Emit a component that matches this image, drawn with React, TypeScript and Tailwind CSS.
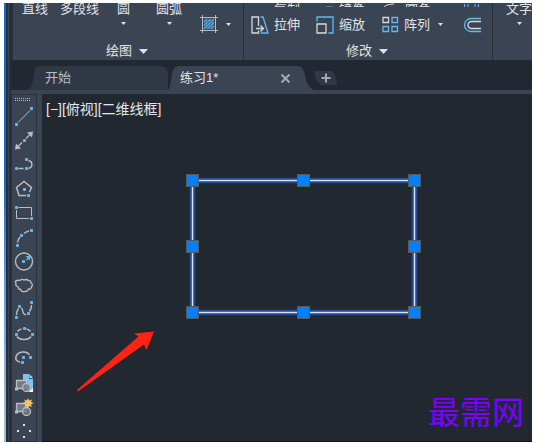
import { ReactNode } from "react";

const GREY = "#b9bdc3";
const BLUE = "#63b8f0";

function Dot({ x, y }: { x: number; y: number }) {
  return <rect x={Math.floor(x) - 1} y={Math.floor(y) - 1} width="3" height="3" rx="0.7" fill={BLUE} stroke="none" />;
}

function Caret({ big = false }: { big?: boolean }) {
  return (
    <svg width={big ? 9 : 5} height={big ? 5 : 3} viewBox="0 0 8 4" preserveAspectRatio="none" aria-hidden="true">
      <path d="M0 0h8L4 4z" fill="#dde0e4" />
    </svg>
  );
}

const drawTools: { name: string; icon: ReactNode }[] = [
  {
    name: "直线",
    icon: (
      <>
        <path d="M6 17.500L18 5.500" />
        <Dot x={4} y={19} />
        <Dot x={19.5} y={3.5} />
      </>
    ),
  },
  {
    name: "构造线",
    icon: (
      <>
        <path d="M6.500 17L10 13.500M14 9.500l3.500-3.500" strokeWidth="1.3" />
        <path d="M3 20.500l1-6 5 5zM21 2.500l-6 1 5 5z" fill={GREY} stroke="none" />
        <Dot x={12} y={11.5} />
      </>
    ),
  },
  {
    name: "多段线",
    icon: (
      <>
        <path d="M6.500 15.500h5M16.500 7.500c4.500 1 4.500 7 0 8" strokeWidth="1.5" />
        <Dot x={4} y={15.5} />
        <Dot x={14} y={15.5} />
        <Dot x={14} y={6.5} />
      </>
    ),
  },
  {
    name: "多边形",
    icon: (
      <>
        <path d="M17.500 15L19.500 10.500 12 4.500 4.500 10.500 7 18.500h7" strokeWidth="1.5" />
        <Dot x={12} y={12} />
        <Dot x={16} y={18.5} />
      </>
    ),
  },
  {
    name: "矩形",
    icon: (
      <>
        <path d="M6.500 6.500h13V15M17 17.500H4.500V9" />
        <Dot x={4} y={6.5} />
        <Dot x={19.5} y={17.5} />
      </>
    ),
  },
  {
    name: "圆弧",
    icon: (
      <>
        <path d="M5.500 17.500Q6 14.500 8 12M12 8.500Q14.500 6.500 17 6" strokeWidth="1.4" />
        <Dot x={5} y={20} />
        <Dot x={9.5} y={10} />
        <Dot x={19.5} y={5.5} />
      </>
    ),
  },
  {
    name: "圆",
    icon: (
      <>
        <circle cx="12" cy="12.5" r="8.500" strokeWidth="1.4" />
        <Dot x={11.5} y={12.5} />
        <path d="M13.500 7h4.500v4.500l-1.500-1.500-1.500 1.500-1-1 1.500-1.500z" fill={BLUE} stroke="none" />
      </>
    ),
  },
  {
    name: "修订云线",
    icon: (
      <path
        d="M8 7.500q2-2 4-.3 2.500-1.700 4.500.5 2.500-.5 2.500 2.300 2.500 1.500.5 4-.5 2.500-3 2-1 3-4 2.500-3 1-4-2.500Q6 17 6.500 14q-3.500-1-2.500-3.500Q2.500 8 5 7.500t3 0z"
        strokeWidth="1.3"
      />
    ),
  },
  {
    name: "样条曲线",
    icon: (
      <>
        <path d="M4.500 18Q4.500 14 6.500 11.500M9.500 11C11 13 11 18.500 14 17.500M17.500 14.500Q19.500 12 19.500 8" strokeWidth="1.4" />
        <Dot x={4} y={20.5} />
        <Dot x={7.5} y={9.5} />
        <Dot x={16} y={16} />
        <Dot x={19.5} y={5.5} />
      </>
    ),
  },
  {
    name: "椭圆",
    icon: (
      <>
        <path d="M5.500 10.500Q7 8.500 9.500 7.800M14.500 7.800Q17 8.500 18.500 10.500M19 15.500Q17 18.500 12 18.500T5 15.500" strokeWidth="1.4" />
        <Dot x={4} y={13} />
        <Dot x={12} y={7.5} />
        <Dot x={20} y={13} />
      </>
    ),
  },
  {
    name: "椭圆弧",
    icon: (
      <>
        <path d="M17.500 10C15 5.500 6 6 4 11.500 3.200 14.500 5.500 16.500 8 17.200" strokeWidth="1.5" />
        <Dot x={11} y={12.5} />
        <Dot x={18.5} y={12.5} />
        <Dot x={10.5} y={17.5} />
      </>
    ),
  },
  {
    name: "插入块",
    icon: (
      <>
        <path d="M11 5h6v5h4v13h-4l-6-6z" fill="#7cc3f5" stroke="none" />
        <path d="M17.500 5v4H21z" fill="#b5dcf8" stroke="none" />
        <path d="M17 23l4-4v4z" fill="#fff" stroke="none" />
        <path d="M4.500 11.500h10v8h-10z" fill="#737b86" strokeWidth="1.3" />
        <circle cx="14.5" cy="18.500" r="4" fill="#737b86" fillOpacity=".8" strokeWidth="1.3" />
        <path d="M3 18.500h3v3H3z" fill={GREY} stroke="none" />
      </>
    ),
  },
  {
    name: "创建块",
    icon: (
      <>
        <path d="M4.500 10.500h10v8h-10z" fill="#737b86" strokeWidth="1.3" />
        <circle cx="14.5" cy="18.500" r="4" fill="#737b86" fillOpacity=".8" strokeWidth="1.3" />
        <path d="M3 17.500h3v3H3z" fill={GREY} stroke="none" />
        <path d="M16 5l1.200 2.500L20 6.500 19 9l2.500 1L19 11.500l1 2.500-2.800-1L16 15.500 14.800 13l-2.300 1 .8-2.500L10.500 10l2.800-1L12 6.500l2.800 1z" fill="#f5c36b" stroke="none" />
      </>
    ),
  },
  {
    name: "点",
    icon: <path d="M11 7h2v2h-2zM5 13h2v2H5zM17 13h2v2h-2zM11 19h2v2h-2z" fill="#e2e4e7" stroke="none" />,
  },
];

function HatchIcon() {
  return (
    <svg width="18" height="18" viewBox="0 0 18 18" fill="none" aria-hidden="true">
      <path d="M4 4h10v10H4z" fill="#3d6587" />
      <path d="M4 7l3-3M4 10.500L10.500 4M4 14L14 4M7.500 14L14 7.500M11 14l3-3" stroke="#58a9e0" strokeWidth="1.300" />
      <path d="M2.500 0v18M15.500 0v18M0 2.500h18M0 15.500h18" stroke="#b9bdc3" />
    </svg>
  );
}

function StretchIcon() {
  return (
    <svg width="18" height="18" viewBox="0 0 18 18" fill="none" strokeWidth="1.300" aria-hidden="true">
      <path d="M9.500 1h2.500l5 16H9.500" stroke={BLUE} />
      <path d="M7.500 10V1H1v16h6.500v-2.500M5 12.500h7M9.500 9.500l3 3-3 3" stroke="#d6d9dc" />
    </svg>
  );
}

function ScaleIcon() {
  return (
    <svg width="18" height="18" viewBox="0 0 18 18" fill="none" strokeWidth="1.300" aria-hidden="true">
      <path d="M1 5.500V1h16v16h-4.500" stroke={BLUE} />
      <path d="M1 8h9v9H1z" stroke="#d6d9dc" />
    </svg>
  );
}

function ArrayIcon() {
  return (
    <svg width="18" height="18" viewBox="0 0 18 18" fill="none" strokeWidth="1.300" aria-hidden="true">
      <path d="M1 1.500h5.500v5H1z" stroke="#d6d9dc" />
      <path d="M10 1.500h5.500v5H10zM1 10.500h5.500v5H1zM10 10.500h5.500v5H10z" stroke={BLUE} />
    </svg>
  );
}

function OffsetIcon() {
  return (
    <svg width="18" height="18" viewBox="0 0 18 18" fill="none" strokeWidth="1.300" aria-hidden="true">
      <path d="M18 2.500H8a6.500 6.500 0 0 0 0 13h10" stroke={BLUE} />
      <path d="M18 5.500H8.500a3.500 3.500 0 0 0 0 7H18" stroke="#d6d9dc" />
    </svg>
  );
}

function PanelTitle({ children }: { children: string }) {
  return (
    <button type="button" className="mx-auto flex h-4 items-center gap-[7px] pr-0.5 text-[13px] leading-4">
      {children}
      <Caret big />
    </button>
  );
}

function Ribbon() {
  return (
    <header className="flex h-[57px] gap-px bg-[#272e38] text-[13px] whitespace-nowrap">
      <section className="flex w-[230px] shrink-0 flex-col justify-between bg-[#3b4453] pb-px">
        <div className="flex pl-[9px] leading-3">
          <button type="button" className="mr-3 self-start">直线</button>
          <button type="button" className="mr-[18px] self-start">多段线</button>
          <button type="button" className="mr-[26px] flex flex-col items-center gap-[7px] self-start">
            圆
            <Caret />
          </button>
          <button type="button" className="mr-[18px] flex flex-col items-center gap-[7px] self-start">
            圆弧
            <Caret />
          </button>
          <button type="button" aria-label="图案填充" className="flex items-center gap-2 pt-3">
            <HatchIcon />
            <Caret />
          </button>
        </div>
        <PanelTitle>绘图</PanelTitle>
      </section>
      <section className="flex w-[248px] shrink-0 flex-col justify-between bg-[#3b4453] pb-px">
        <div className="grid grid-cols-[65px_66px_81px_20px] pl-[7px]">
          <div className="col-span-4 grid h-1 grid-cols-subgrid items-end overflow-hidden leading-[14px]">
            <button type="button" className="flex items-end gap-[5px]">
              <svg width="18" height="14" viewBox="0 0 18 14" fill="none" stroke={BLUE} aria-hidden="true">
                <circle cx="7.500" cy="9.500" r="3.500" />
                <circle cx="14" cy="9.500" r="3.500" />
              </svg>
              复制
            </button>
            <button type="button" className="flex items-end gap-[5px]">
              <svg width="18" height="14" viewBox="0 0 18 14" fill="none" aria-hidden="true">
                <path d="M1 12.500h6V4z" stroke="#d6d9dc" />
                <path d="M10.500 4h6v8.500h-6z" stroke={BLUE} />
              </svg>
              镜像
            </button>
            <button type="button" className="flex items-end gap-[5px]">
              <svg width="18" height="14" viewBox="0 0 18 14" fill="none" stroke="#d6d9dc" aria-hidden="true">
                <path d="M.5 14V8Q.5 1 12 1" />
              </svg>
              圆角
            </button>
            <button type="button" aria-label="分解">
              <svg width="18" height="14" viewBox="0 0 18 14" fill="none" stroke={BLUE} aria-hidden="true">
                <path d="M1.500 1v11.500h14V1M5 1v9h7V1" />
              </svg>
            </button>
          </div>
          <button type="button" className="mt-2 flex items-center gap-[5px]">
            <StretchIcon />
            拉伸
          </button>
          <button type="button" className="mt-2 flex items-center gap-[5px]">
            <ScaleIcon />
            缩放
          </button>
          <button type="button" className="mt-2 flex items-center gap-1">
            <ArrayIcon />
            阵列
            <span className="pl-1">
              <Caret />
            </span>
          </button>
          <button type="button" aria-label="偏移" className="mt-2">
            <OffsetIcon />
          </button>
        </div>
        <PanelTitle>修改</PanelTitle>
      </section>
      <section className="flex-1 bg-[#3b4453] pl-[13px] leading-3">
        <button type="button" className="flex flex-col items-center gap-[7px]">
          文字
          <Caret />
        </button>
      </section>
    </header>
  );
}

function FileTabs() {
  return (
    <nav className="flex h-[34px] items-end border-b-4 border-[#3b4453] bg-[#222831] text-[13px]">
      <svg width="10" height="24" viewBox="0 0 10 24" className="ml-4 shrink-0" aria-hidden="true">
        <path d="M0 24Q5 23 6 14Q7 2 10 0v24z" fill="#303845" />
      </svg>
      <button type="button" className="h-6 w-[131px] shrink-0 rounded-tr-lg bg-[#303845] pl-2 text-left text-[#b9bec5]">
        开始
      </button>
      <svg width="10" height="24" viewBox="0 0 10 24" className="shrink-0" aria-hidden="true">
        <path d="M0 24Q2 23 3 14Q4 1 10 0v24z" fill="#3b4453" />
      </svg>
      <div className="flex h-6 w-[112px] shrink-0 items-center justify-between bg-[#3b4453] pl-0.5 text-[#e0e3e7]">
        <button type="button">练习1*</button>
        <button type="button" aria-label="关闭">
          <svg width="9" height="9" viewBox="0 0 9 9" stroke="#a3a9b1" strokeWidth="2" aria-hidden="true">
            <path d="M.5.500l8 8M8.500.500l-8 8" />
          </svg>
        </button>
      </div>
      <svg width="24" height="24" viewBox="0 0 24 24" className="shrink-0" aria-hidden="true">
        <path d="M0 0h8Q13 0 15 9Q17 22 24 24H0z" fill="#3b4453" />
      </svg>
      <button type="button" aria-label="新图形" className="mb-1">
        <svg width="24" height="16" viewBox="0 0 24 16" className="block" aria-hidden="true">
          <path d="M0 1h16q6 0 7 14H8Q2 14 0 1z" fill="#303845" />
          <path d="M12 3.500v9M7.500 8h9" stroke="#a3a9b1" strokeWidth="2" />
        </svg>
      </button>
    </nav>
  );
}

function DrawToolbar() {
  return (
    <aside className="mr-[5px] w-[26px] shrink-0 border border-[#2a313c] bg-[#3b4453] pt-0.5">
      <svg width="24" height="8" viewBox="0 0 24 8" className="block" aria-hidden="true">
        <path d="M3 1.500h16M3 3.500h16" stroke="#b4b9c0" strokeDasharray="1 1" />
      </svg>
      {drawTools.map((tool) => (
        <button key={tool.name} type="button" aria-label={tool.name} className="block h-6 w-6">
          <svg width="24" height="24" viewBox="0 0 24 24" fill="none" stroke={GREY}>
            {tool.icon}
          </svg>
        </button>
      ))}
    </aside>
  );
}

const grips = [
  [150, 86],
  [261, 86],
  [372, 86],
  [150, 152],
  [372, 152],
  [150, 218],
  [261, 218],
  [372, 218],
];

function Drawing() {
  return (
    <section className="relative flex-1 overflow-hidden border-b border-[#17141f] bg-[#212830]">
      <p className="pt-[3px] pl-1 text-[14px] leading-6 text-[#e4e6e8]">[−][俯视][二维线框]</p>
      <svg className="absolute top-0 left-0" width="490" height="347" viewBox="0 0 490 347" fill="none" aria-hidden="true">
        <rect x="150.5" y="86.5" width="222" height="132" stroke="#284a94" strokeWidth="5.5" />
        <rect x="150.5" y="86.5" width="222" height="132" stroke="#dfe3ef" strokeWidth="1.400" />
        {grips.map(([x, y]) => (
          <rect key={`${x}-${y}`} x={x - 5.5} y={y - 5.5} width="12" height="12" fill="#0080ff" stroke="#55585c" />
        ))}
        <path d="M35 296L96.500 242.500 92 239.500l20-2-7.500 18.500-2.500-5.500L36 297.500z" fill="#ff2314" />
      </svg>
      <p className="absolute right-2 bottom-3 text-[32px] leading-8 text-[#7b00ff]">最需网</p>
    </section>
  );
}

export default function App() {
  return (
    <main className="flex min-h-screen bg-white pt-[3px] pr-[9px] pb-0.5 pl-1 font-['Liberation_Sans','Noto_Sans_CJK_SC',sans-serif] text-[#e0e3e7]">
      <div className="w-0.5 shrink-0 bg-linear-to-b from-[#1866c8] from-40% via-[#5c9fe8] via-65% to-[#a9bfc9]" />
      <div className="w-[5px] shrink-0 border-x-2 border-[#272f3a] bg-[#3b4453]" />
      <div className="flex min-w-0 flex-1 flex-col bg-[#3b4453]">
        <div className="bg-[#272e38] pl-0.5">
          <Ribbon />
        </div>
        <FileTabs />
        <div className="flex flex-1">
          <DrawToolbar />
          <Drawing />
        </div>
      </div>
    </main>
  );
}
